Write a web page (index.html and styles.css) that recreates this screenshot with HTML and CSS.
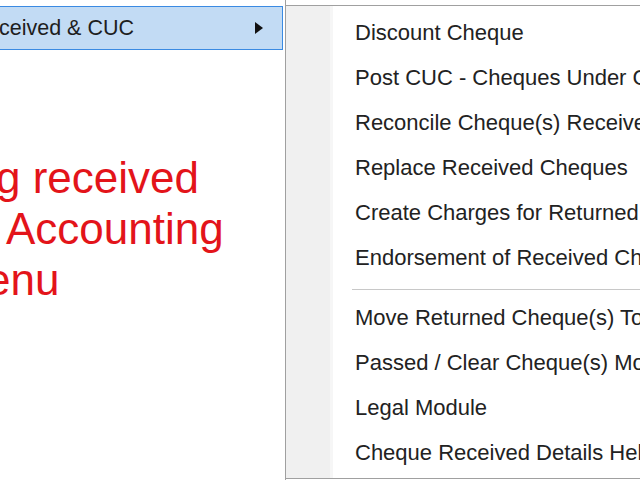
FILE: index.html
```html
<!DOCTYPE html>
<html>
<head>
<meta charset="utf-8">
<link rel="stylesheet" href="styles.css">
</head>
<body>
<div class="parent">
  <div class="pitem hl">
    <span class="plabel">ceived &amp; CUC</span>
    <span class="arrow"></span>
  </div>
  <div class="caption">
    <div class="cl l1">g received</div>
    <div class="cl l2">Accounting</div>
    <div class="cl l3">enu</div>
  </div>
</div>
<div class="submenu">
  <div class="mi">Discount Cheque</div>
  <div class="mi">Post CUC - Cheques Under Clearance</div>
  <div class="mi">Reconcile Cheque(s) Received</div>
  <div class="mi">Replace Received Cheques</div>
  <div class="mi">Create Charges for Returned Cheques</div>
  <div class="mi">Endorsement of Received Cheques</div>
  <div class="sep"></div>
  <div class="mi">Move Returned Cheque(s) To Legal</div>
  <div class="mi">Passed / Clear Cheque(s) Module</div>
  <div class="mi">Legal Module</div>
  <div class="mi">Cheque Received Details Help</div>
</div>
</body>
</html>
```
FILE: styles.css
```css
html, body {
  margin: 0;
  padding: 0;
}
body {
  width: 640px;
  height: 480px;
  overflow: hidden;
  background: #ffffff;
  display: flex;
  align-items: flex-start;
  font-family: "Liberation Sans", Arial, sans-serif;
}
.parent {
  flex: none;
  width: 285px;
  height: 480px;
  border-right: 1px solid #a0a0a0;
  background: #ffffff;
}
.pitem {
  display: flex;
  align-items: center;
  justify-content: space-between;
  box-sizing: border-box;
  width: 283px;
  height: 44px;
  margin-top: 6px;
  padding-right: 19px;
  font-size: 21.5px;
  line-height: 42px;
  color: #1e1e1e;
  white-space: nowrap;
}
.hl {
  background: #c2dbf4;
  border: 1px solid #3a8ae2;
  border-left: none;
}
.plabel {
  margin-left: -1px;
}
.arrow {
  width: 0;
  height: 0;
  border-left: 8px solid #111;
  border-top: 6px solid transparent;
  border-bottom: 6px solid transparent;
}
.caption {
  margin-top: 102px;
  color: #e3141a;
  font-size: 44px;
  line-height: 51px;
  white-space: nowrap;
}
.l1 { margin-left: -4px; }
.l2 { margin-left: 6px; }
.l3 { margin-left: -14px; }
.submenu {
  flex: none;
  box-sizing: border-box;
  width: 420px;
  height: 474px;
  margin-left: -1px;
  margin-top: 5px;
  padding: 4px 0 3px 0;
  border: 1px solid #a0a0a0;
  background: linear-gradient(to right, #f0f0f0 0, #f0f0f0 44px, #f6f6f6 44px, #f6f6f6 47px, #ffffff 47px);
}
.mi {
  height: 45px;
  line-height: 45px;
  padding-left: 69px;
  font-size: 22px;
  color: #222222;
  white-space: nowrap;
}
.sep {
  margin: 9px 0 4px 66px;
  height: 1px;
  border-bottom: 1px solid #ffffff;
  background: #c8c8c8;
}
```
